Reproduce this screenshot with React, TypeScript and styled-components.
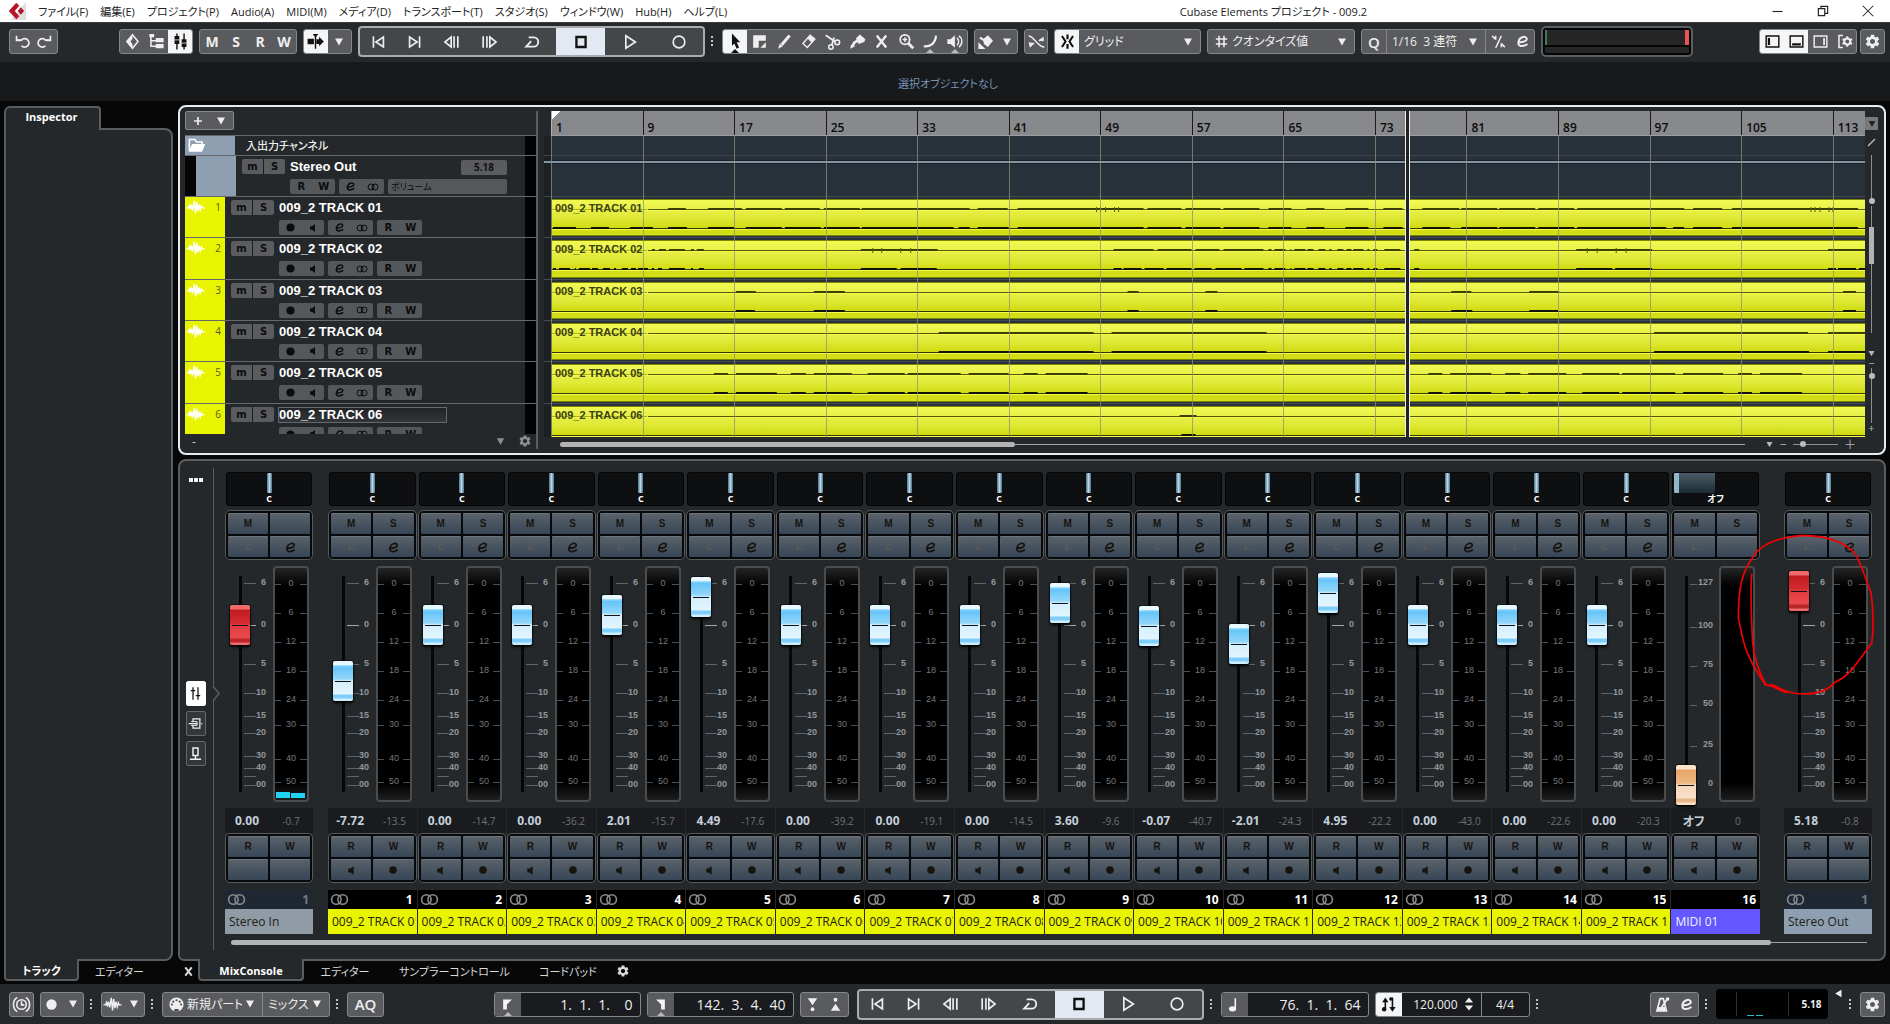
import React from "react";
import styled, { createGlobalStyle, css } from "styled-components";
import { MdSettings } from "react-icons/md";

const UI = `"Open Sans", "Noto Sans CJK JP", sans-serif`;
const ARIAL = `"Liberation Sans", "Noto Sans CJK JP", sans-serif`;

const c = {
  panel: "#25282b",
  line: "#5a5d60",
  button: "#5a5b5e",
  buttonLine: "#85878a",
  yellow: "#e9f500",
  steel: "#8f9fb2",
};

const Global = createGlobalStyle`
  * { box-sizing: border-box; }
  body { margin: 0; background: #070707; font-family: ${UI}; font-feature-settings: "palt"; color: #eee; }
  button, input, select { font: inherit; font-feature-settings: inherit; color: inherit; margin: 0; padding: 0; border: 0; background: none; border-radius: 0; outline: 0; min-width: 0; }
  button { display: flex; align-items: center; justify-content: center; }
  select { appearance: none; }
  svg { display: block; flex: none; }
`;

/* ---------- icons ---------- */

const line = (d: string, w = 2) => <path d={d} fill="none" stroke="currentColor" strokeWidth={w} />;
const fill = (d: string) => <path d={d} fill="currentColor" />;

const icons: Record<string, React.ReactNode> = {
  undo: <>{line("M5 10 H12 A6 6 0 1 1 12 18", 2.4)}{line("M5 4 V10.500 H11", 2.4)}</>,
  redo: <>{line("M19 10 H12 A6 6 0 1 0 12 18", 2.4)}{line("M19 4 V10.500 H13", 2.4)}</>,
  diamond: <>{line("M12 3.500 L19 12 L12 20.500 L5 12 Z", 2)}{fill("M12 2.500 L4 12 L12 21.500 V15.500 L9.500 12 L12 8.500 Z")}</>,
  tree: <>{line("M5 3 V18 H12 M5 11 H12", 2)}{fill("M3 2.500 H9 V6.500 H3 Z M11 7.500 H21 V13 H11 Z M11 15 H21 V20.500 H11 Z")}</>,
  faders: <>{line("M7.500 2 V22 M16.500 2 V22", 1.8)}{fill("M4.500 5 H10.500 V15 H4.500 Z M13.500 9 H19.500 V19 H13.500 Z")}<path d="M4.500 10 H10.500 M13.500 14 H19.500" stroke="#eee" /></>,
  autoscroll: <>{line("M12 4 V21", 1.8)}{fill("M8.500 2.500 H15.500 L12 7 Z M2 8.500 H10 V15.500 H2 Z M13 9 H16.500 V6 L22.500 12 L16.500 18 V15 H13 Z")}</>,
  start: line("M6.500 5 V19 M18.500 6 V18 L9.500 12 Z"),
  end: line("M17.500 5 V19 M5.500 6 V18 L14.500 12 Z"),
  rewind: line("M11 6 V18 L3.500 12 Z M14.500 5 V19 M19 5 V19"),
  forward: line("M13 6 V18 L20.500 12 Z M9.500 5 V19 M5 5 V19"),
  cycle: line("M8 6.500 H14 A5.500 5.500 0 0 1 14 17.500 H5 L11 11", 2.2),
  stop: line("M6.500 6 H17.500 V18 H6.500 Z", 2.8),
  play: line("M7 4.500 L18.500 12 L7 19.500 Z"),
  record: <circle cx="12" cy="12" r="7" fill="none" stroke="currentColor" strokeWidth="2" />,
  arrow: fill("M7.500 2 L18 13 H13.500 L16.500 19.500 L13.500 21 L10.500 14.500 L7.500 17.500 Z"),
  range: <>{fill("M4 4 H20 V11 H11 V20 H4 Z")}{fill("M20 13 V20 H13 Z")}</>,
  pencil: <>{line("M8.500 16 L18.500 4.500", 3.8)}{fill("M4 21 L6 14.500 L10 18 Z")}</>,
  eraser: <>{line("M5 14.500 L14 4 L20 9 L10.500 19.500 Z", 1.8)}{fill("M10.500 8 L14 4 L20 9 L16 13.500 Z")}</>,
  scissors: <>{line("M3.500 4 L15 12 M11 17 L14 7", 2.2)}<circle cx="18" cy="13" r="3" fill="none" stroke="currentColor" strokeWidth="2" /><circle cx="10" cy="19" r="2.800" fill="none" stroke="currentColor" strokeWidth="2" /></>,
  glue: <>{fill("M10 8 L15 3 L22 9 L20.500 12.500 L13.500 15 Z")}{line("M12 11 L8 13.500 L5.500 18", 3.4)}{fill("M3 21 L3.500 16 L9 18 Z")}</>,
  mute: line("M6 4.500 L18 19.500 M18 4.500 L6 19.500", 3),
  zoom: <>{<circle cx="10" cy="9.500" r="6" fill="none" stroke="currentColor" strokeWidth="2.200" />}{line("M14 14 L20.500 20.500", 3.6)}{line("M7 9.500 H13 M10 6.500 V12.500", 1.8)}</>,
  curve: line("M3.500 18 C11 19 18 15 19 4.500", 2.8),
  speaker: <>{fill("M3 9 H7 L12.500 4 V20 L7 15 H3 Z")}{line("M15 7.500 C18 9.500 18 14.500 15 16.500 M17.500 5 C22.500 8 22.500 16 17.500 19", 1.8)}</>,
  bucket: <>{fill("M9 9 L15 4 L21.500 11 L15 19 L10 15 Z M3 13 L12 21.500 L3 21.500 Z")}{line("M5 7 L11 11", 2.6)}</>,
  fade: <>{line("M2 5 C9 5 13 19 22 19", 1.8)}{line("M3 18 L9 14 M15 11 L21 9", 1.8)}{fill("M2 13 L9 14 L4 20 Z M15 10 L21 6 V12 Z")}</>,
  snap: <>{line("M12 3 V9 M12 15 V21", 2.8)}{line("M5 5 L9.500 12 L5 19 M19 5 L14.500 12 L19 19", 2.6)}</>,
  hash: line("M8.500 4 V20 M15.500 4 V20 M4 8.500 H20 M4 15.500 H20", 2.2),
  swing: <>{line("M8 21 L16 4", 2)}{line("M3 4 L8 9 M8 4 V9.500 M21 20 L16 15 M16 20 V14.500", 2.2)}</>,
  edit: line("M6 13 C13 13.500 18.500 11 18 8 C17 3.500 8.500 5 6.500 11.500 C4.500 19 11.500 20.500 19 15.500", 2.8),
  zoneLeft: <>{line("M4 5 H20 V19 H4 Z", 1.8)}{line("M7.500 7.500 V16.500", 2.8)}</>,
  zoneBottom: <>{line("M4 5 H20 V19 H4 Z", 1.8)}{line("M6.500 15.500 H17.500", 2.8)}</>,
  zoneRight: <>{line("M4 5 H20 V19 H4 Z", 1.8)}{line("M16.500 7.500 V16.500", 2.2)}</>,
  zoneSetup: <>{line("M10 4.500 H5 V19.500 H10", 2)}<circle cx="15.500" cy="12" r="3.800" fill="none" stroke="currentColor" strokeWidth="2.600" />{line("M15.500 5.500 V9 M15.500 15 V18.500 M9.500 9 L12.500 10.500 M18.500 13.500 L21.500 15 M9.500 15 L12.500 13.500 M18.500 10.500 L21.500 9", 2.4)}</>,
  wave: line("M0.500 12.500 H3 L4.500 9.500 L5.500 14.500 L7 8.500 L8.500 15.500 L10.500 3.500 L12 19.500 L13.500 5 L15 16.500 L16.500 8.500 L18 15 L19.500 10 L20.500 12.500 H23.500", 1.8),
  din: <><circle cx="12" cy="12" r="10" fill="currentColor" />{[[5.5, 12], [7.5, 8], [12, 6], [16.5, 8], [18.5, 12]].map(([x, y]) => <circle key={x} cx={x} cy={y} r="1.500" fill="#4a4b4e" />)}<path d="M9 22 V18.500 H15 V22" fill="#4a4b4e" /></>,
  clock: <><circle cx="12" cy="12" r="6" fill="none" stroke="currentColor" strokeWidth="2" />{line("M12 8 V12.500 H15.500", 2)}{line("M6.500 3 A11 11 0 0 0 6.500 21 M17.500 3 A11 11 0 0 1 17.500 21", 2)}</>,
  dot: <circle cx="12" cy="12" r="6.500" fill="currentColor" />,
  monitor: fill("M6 8.500 H10 L16 4 V20 L10 15.500 H6 Z"),
  flagLeft: fill("M5 4 H19 L11 12 V20 H5 Z"),
  flagRight: fill("M19 4 H5 L13 12 V20 H19 Z"),
  punchIn: <>{fill("M6 4 H18 L12 13 Z")}<circle cx="12" cy="18" r="2.400" fill="currentColor" /></>,
  punchOut: <>{fill("M6 20 H18 L12 11 Z")}<circle cx="12" cy="6" r="2.400" fill="currentColor" /></>,
  note: <><ellipse cx="9.500" cy="17.500" rx="4.500" ry="3.400" fill="currentColor" />{line("M13 17 V4", 2)}</>,
  tempo: <>{line("M8 5 V18 M17 3 V17", 2)}{fill("M4 9 L8 3 L12 9 Z M13 15 L17 21 L21 15 Z")}<circle cx="6.500" cy="18" r="2.800" fill="currentColor" /><circle cx="15" cy="5" r="2.200" fill="currentColor" /></>,
  metronome: <>{line("M9 4.500 H13 L17 20 H5 Z", 2.2)}{line("M10.500 16 L18 5", 2.2)}{fill("M6.500 15 H15.500 V20 H5.500 Z")}<circle cx="18.500" cy="5" r="2.200" fill="currentColor" /></>,
  link: <><circle cx="8" cy="12" r="6" fill="none" stroke="currentColor" strokeWidth="2" /><circle cx="16" cy="12" r="6" fill="none" stroke="currentColor" strokeWidth="2" /></>,
  folder: <>{line("M3 18 V4.500 H10 L12 7.500 H19 V10", 2)}{fill("M6.500 10 H23 L19 20 H2 Z")}</>,
  railFaders: line("M8 2 V22 M16 2 V22 M4.500 7.500 H11.500 M12.500 15.500 H19.500", 2),
  railRack: <>{line("M8 9 V4.500 H19 V19.500 H8 V15", 2)}{line("M1 12 H15 M21 12 H23", 2)}{line("M5 9 H14.500 V15 H5", 1.6)}</>,
  railMeter: line("M8 3 H16 V15 H8 Z M12 15 V20 M3 21 H21", 2.4),
  caret: fill("M4 5 H20 L12 19 Z"),
  caretLeft: fill("M20 2 V22 L3 12 Z"),
  plus: line("M12 4 V20 M4 12 H20", 3.4),
  close: line("M5 3 L19 21 M19 3 L5 21", 4.4),
  minimize: line("M4 12 H20", 1.8),
  restore: line("M4 8 H15 V20 H4 Z M8.500 8 V4 H20 V16 H15", 2),
  quit: line("M3 3 L21 21 M21 3 L3 21", 1.8),
  spin: fill("M12 1 L19 9.500 H5 Z M12 23 L19 14.500 H5 Z"),
};

const Icon = ({ name, size = 19 }: { name: string; size?: number }) => (
  <svg width={size} height={size} viewBox="0 0 24 24" aria-hidden="true">{icons[name]}</svg>
);

/* ---------- window chrome ---------- */

const Window = styled.div`display: flex; flex-direction: column; min-height: 100vh;`;

const MenuBar = styled.header`
  display: flex; align-items: center; height: 23px; padding-left: 8px;
  background: #fff; color: #222; font-size: 11px; border-bottom: 1px solid #3a3c3e;
`;
const Menu = styled.nav`display: flex; gap: 12px; margin-left: 12px;`;
const MenuItem = styled.button`white-space: nowrap;`;
const Space = styled.div<{ $grow: number }>`flex: ${p => p.$grow};`;
const WindowButton = styled.button`width: 45px; height: 20px;`;

const Bar = styled.div<{ $spread?: boolean }>`
  display: flex; align-items: center; gap: 6px; height: ${p => (p.$spread ? 40 : 39)}px;
  padding: ${p => (p.$spread ? "0 5px 0 9px" : "0 5px 2px 9px")};
  background: ${c.panel}; font-size: 12px;
  justify-content: ${p => (p.$spread ? "space-between" : "flex-start")};
`;
const BarPart = styled.div<{ $push?: boolean }>`
  display: flex; align-items: center; gap: 6px; ${p => p.$push && "margin-left: auto; gap: 3px;"}
`;
const Group = styled.div<{ $w: number; $after?: number }>`
  display: flex; width: ${p => p.$w}px; height: 25px; margin-right: ${p => p.$after ?? 0}px; flex: none;
  background: ${c.button}; border: 1px solid ${c.buttonLine}; border-radius: 3px; overflow: hidden;
`;
const Tool = styled.button<{ $on?: boolean; $split?: boolean; $notch?: boolean }>`
  flex: 1; position: relative; font-weight: 700; font-size: 14px;
  ${p => p.$on && "background: #f4f5f6; color: #111;"}
  ${p => p.$split && `border-right: 1px solid ${c.buttonLine};`}
  ${p => p.$notch && css`
    &::after { content: ""; position: absolute; bottom: 0; border: 4px solid transparent; border-top: 0; border-bottom-color: ${p.$on ? "#111" : "#bbb"}; }
  `}
`;
const Pick = styled.label<{ $w?: number; $split?: boolean }>`
  display: flex; align-items: center; padding: 0 6px 0 5px; gap: 2px;
  ${p => (p.$w ? `width: ${p.$w}px;` : "flex: 1; min-width: 0;")}
  ${p => p.$split && `border-right: 1px solid ${c.buttonLine};`}
  select { flex: 1; height: 100%; }
`;
const Fixed = styled.button<{ $w: number; $on?: boolean; $split?: boolean }>`
  width: ${p => p.$w}px; flex: none; font-size: 15px; font-weight: 600;
  ${p => p.$on && "background: #f4f5f6; color: #111;"}
  ${p => p.$split && `border-right: 1px solid ${c.buttonLine};`}
`;
const Transport = styled.div`
  display: flex; width: 347px; height: 31px; flex: none; overflow: hidden;
  background: #44474a; border: 2px solid #a9abad; border-radius: 4px;
`;
const TransportButton = styled.button<{ $wide?: boolean; $on?: boolean }>`
  flex: ${p => (p.$wide ? 49 : 37)};
  ${p => p.$on && "background: #e3e9f3; color: #111;"}
`;
const Grip = styled.span`
  width: 5px; height: 11px; flex: none;
  background: repeating-linear-gradient(#c4c6c8 0 2px, transparent 2px 4px) left / 2px 11px no-repeat;
`;
const LoadMeter = styled.div`
  width: 152px; height: 31px; padding: 2px; background: #050505; border: 2px solid #5b5e60; border-radius: 5px;
  display: grid; grid-template-rows: 15px 1fr; gap: 2px;
`;
const LoadBar = styled.div<{ $hot?: boolean }>`
  background: #262626; ${p => p.$hot && "border-left: 2px solid #3d7a58; border-right: 4px solid #ee5350;"}
`;
const InfoLine = styled.div`
  height: 39px; display: flex; align-items: center; justify-content: center; padding: 2px 0 0 6px;
  background: #18191b; color: #7593b8; font-size: 11px;
`;
const Locator = styled.label<{ $w: number }>`
  display: flex; width: ${p => p.$w}px; height: 25px; flex: none; align-items: stretch;
  border: 1px solid ${c.buttonLine}; border-radius: 3px; background: #191b1e; overflow: hidden;
  input { flex: 1; text-align: right; padding-right: 7px; font-size: 14px; }
`;
const LocatorIcon = styled.span<{ $on?: boolean; $notch?: boolean }>`
  width: 26px; display: flex; align-items: center; justify-content: center; position: relative;
  background: ${p => (p.$on ? "#f4f5f6" : c.button)}; color: ${p => (p.$on ? "#111" : "#f4f4f4")};
  ${p => p.$notch && css`
    &::after { content: ""; position: absolute; bottom: 0; border: 4px solid transparent; border-top: 0; border-bottom-color: #bbb; }
  `}
`;
const TempoBox = styled.div`
  display: flex; width: 155px; height: 25px; align-items: stretch; overflow: hidden;
  border: 1px solid ${c.buttonLine}; border-radius: 3px; background: #191b1e;
  input { text-align: right; font-size: 12px; width: 56px; }
  input:last-child { text-align: center; width: 48px; border-left: 1px solid ${c.buttonLine}; }
`;
const OutMeter = styled.div`
  width: 112px; height: 30px; background: #000; border-radius: 4px; display: grid;
  grid-template-columns: 21px 52px 1fr; align-items: center; justify-items: center;
  font-size: 10px; font-weight: 700;
  span:nth-child(-n + 2) { height: 24px; width: 100%; border-right: 1px solid #333; }
  span:last-child { padding-left: 6px; }
`;
const OutLevel = styled.span`
  background: linear-gradient(90deg, #2fb8c9 7px, transparent 7px 9px, #2fb8c9 9px) 10px 100% / 16px 1px no-repeat;
`;
const Clipped = styled.span`align-self: flex-start;`;

/* ---------- layout ---------- */

const Body = styled.main`flex: 1; display: flex; gap: 4px; padding: 4px 4px 3px; background: #070707;`;
const LeftZone = styled.aside`width: 170px; flex: none; display: flex; flex-direction: column;`;
const LeftBody = styled.div`
  flex: 1; background: ${c.panel}; border: 2px solid ${c.line}; border-radius: 0 8px 8px 0; margin-right: 1px;
`;
const TopTab = styled.div`
  width: 97px; height: 24px; margin-bottom: -2px; position: relative; margin-top: 1px;
  display: flex; align-items: center; justify-content: center; padding: 0 2px 5px 0;
  background: ${c.panel}; border: 2px solid ${c.line}; border-bottom: 0; border-radius: 6px 4px 0 0;
  font-size: 11px; font-weight: 700; color: #fff;
`;
const TabRow = styled.div`display: flex; height: 20px; font-size: 11px; color: #d8dadc;`;
const Tab = styled.button<{ $on?: boolean; $w: number }>`
  width: ${p => p.$w}px; white-space: nowrap; flex: none;
  ${p => p.$on && css`
    position: relative; height: 22px; margin-top: -2px; padding-top: 2px; color: #fff; font-weight: 700;
    background: ${c.panel}; border: 2px solid ${c.line}; border-top: 0; border-radius: 0 0 4px 4px;
  `}
`;
const RightZone = styled.div`flex: 1; min-width: 0; display: flex; flex-direction: column;`;

/* ---------- project ---------- */

const Project = styled.section`
  display: flex; height: 350px; padding-top: 4px; margin-bottom: 4px;
  background: ${c.panel}; border: 2px solid #e8eaec; border-radius: 8px;
`;
const TrackPane = styled.div`width: 358px; flex: none; padding-left: 5px; border-right: 2px solid ${c.line}; margin-bottom: 4px;`;
const TrackHead = styled.div`height: 24px;`;
const AddGroup = styled.div`
  display: flex; width: 49px; height: 19px; background: ${c.button}; border: 1px solid ${c.buttonLine}; border-radius: 2px;
`;
const TrackList = styled.div`height: 299px; overflow: hidden;`;
const SixRows = styled.div`display: grid; grid-template-rows: repeat(6, minmax(0, 1fr)); height: 248px;`;
const rowLine = "border-top: 1px solid #66696b;";
const Row = styled.div`display: flex; ${rowLine} overflow: hidden;`;
const FolderRow = styled(Row)`height: 20px;`;
const StereoRow = styled(Row)`height: 41px;`;
const FolderCell = styled.div`width: 50px; background: ${c.steel}; display: flex; align-items: center; padding-left: 2px; color: #fff;`;
const StereoCell = styled.div`width: 51px; background: ${c.steel}; border-left: 11px solid #050505;`;
const FolderName = styled.div`flex: 1; padding-left: 11px; font-size: 11px; font-weight: 500; line-height: 19px;`;
const ColorCell = styled.div`
  width: 40px; background: ${c.yellow}; display: flex; justify-content: space-between; padding: 1px 4px 0 1px;
  font-size: 10px; line-height: 18px; color: #555a1c;
  svg { color: #fff; }
`;
const Cells = styled.div`
  flex: 1; min-width: 0; padding: 3px 0 0 6px; display: grid; grid-template-columns: 43px 1fr;
  grid-template-rows: 16px 15px; column-gap: 4px; row-gap: 4px;
`;
const MuteSolo = styled.div`
  display: flex; gap: 1px; height: 15px; border-radius: 2px; overflow: hidden; background: #1a1c1e;
  button { flex: 1; background: #5a5c5f; color: #0c0c0c; font: 700 10px/15px "DejaVu Sans", sans-serif; }
`;
const Chips = styled.div`grid-column: 2; display: flex; gap: 4px; padding-left: 1px;`;
const Chip = styled.div<{ $wide?: boolean }>`
  display: flex; width: ${p => (p.$wide ? 119 : 45)}px; height: 15px; background: #55585b; border-radius: 2px; color: #0c0c0c;
  button { flex: 1; font: 700 10px/15px "DejaVu Sans", sans-serif; }
  span { font-size: 9px; line-height: 15px; padding-left: 3px; }
`;
const NameLine = styled.div`display: flex; justify-content: space-between; padding-right: 18px; align-items: center;`;
const NameInput = styled.input<{ $active?: boolean }>`
  width: 169px; height: 16px; font: 700 13px/16px ${ARIAL}; color: #fff; padding-left: 1px;
  ${p => p.$active && "box-shadow: inset 0 0 0 1px #66696c; background: linear-gradient(#202226, #34373b);"}
`;
const VolumeBox = styled.span`
  width: 46px; height: 15px; background: #5a5c5f; color: #111; border-radius: 2px;
  font: 700 10px/15px ${UI}; text-align: center;
`;
const LevelStrip = styled.div`width: 11px; background: #020202;`;
const TrackFoot = styled.div`
  display: flex; align-items: center; height: 14px; padding: 0 4px 0 7px; gap: 12px; color: #8d9092; font-size: 12px;
  span { flex: 1; color: #ccc; }
`;

const Timeline = styled.div`flex: 1; min-width: 0; margin-left: 6px;`;
const barColumns = "display: grid; grid-template-columns: repeat(14, 17fr) 6fr;";
const Ruler = styled.div`
  ${barColumns} height: 25px; margin-left: 7px; background: #87898c; color: #0c0c0c; overflow: hidden;
  border-bottom: 1px solid #9b9da0;
  span { border-left: 1px solid #1a1a1a; padding: 9px 0 0 4px; font-size: 12px; line-height: 15px; font-weight: 600; }
  span:first-child { background: linear-gradient(135deg, #fff 6px, transparent 6px); border-color: #b0b2b4; }
`;
const Lanes = styled.div`
  height: 301px; position: relative; clip-path: inset(-25px 0 0 0);
  background: linear-gradient(90deg, #1d2023 7px, #28303a 7px);
`;
const FolderLane = styled.div`height: 19px;`;
const StereoLane = styled.div`
  height: 41px; border-top: 1px solid #3d444c; padding-top: 4px;
  &::before { content: ""; display: block; height: 2px; background: #8494a2; border: solid #1a2028; border-width: 1px 0; }
`;
const LaneRow = styled.div`
  padding: 2px 0 1px 7px; border-top: 1px solid #434a52; display: grid; grid-template-rows: minmax(0, 1fr);
`;
const Clip = styled.div`
  display: grid; grid-template-rows: minmax(0, 1fr); overflow: hidden;
  border: 1px solid #7d8505; border-left-color: #4b5003; border-right: 0;
  background: linear-gradient(#f1f955, #e0e938 50%, #d2dc14 76%, #d4de18);
  > * { grid-area: 1 / 1; }
  > svg { width: 100%; height: 36px; }
  > span { font: 700 11px/13px ${ARIAL}; color: #3b4016; padding: 2px 0 0 3px; }
`;
const BarLines = styled.div`
  ${barColumns} position: absolute; inset: 0 0 0 7px; pointer-events: none;
  span { border-left: 1px solid rgba(140, 145, 120, 0.75); }
`;
const Playhead = styled.div`
  position: absolute; top: -25px; bottom: 0; left: 65.2%; width: 5px;
  background: #222; border: solid #f0f0f0; border-width: 0 1px;
`;
const TimelineFoot = styled.div`display: flex; align-items: center; height: 14px; color: #b4b6b8; padding: 0 0 0 16px;`;
const ScrollLine = styled.div<{ $thumb: number; $rest: number }>`
  flex: 1; height: 5px; display: grid; grid-template-columns: ${p => p.$thumb}fr ${p => p.$rest}fr; align-items: center;
  &::before { content: ""; height: 5px; border-radius: 3px; background: #b3b3b4; }
  &::after { content: ""; height: 1px; background: #a3a4a6; }
`;
const ZoomRange = styled.input.attrs({ type: "range" })<{ $tall?: number }>`
  appearance: none; flex: none;
  ${p => (p.$tall
    ? `writing-mode: vertical-lr; width: 7px; height: ${p.$tall}px; background: linear-gradient(#8d8f91, #8d8f91) center / 1px 100% no-repeat;`
    : "width: 45px; height: 7px; background: linear-gradient(#8d8f91, #8d8f91) center / 100% 1px no-repeat;")}
  &::-webkit-slider-thumb { appearance: none; width: 6px; height: 6px; border-radius: 50%; background: #b9bbbd; }
`;
const ZoomBits = styled.div`display: flex; align-items: center; gap: 6px; padding: 0 9px 0 20px; font-size: 12px;`;
const SideStrip = styled.div`
  width: 19px; flex: none; display: flex; flex-direction: column; align-items: center; padding: 6px 6px 0 0; color: #b4b6b8;
  font-size: 11px; line-height: 10px;
`;
const SideButton = styled.button`width: 13px; height: 13px; background: #77797b; color: #222; border-radius: 1px; margin-bottom: 8px;`;
const Slash = styled.svg`margin-bottom: 8px;`;
const SideScroll = styled.div`
  width: 5px; height: 127px; margin: 2px 0 16px;
  background: linear-gradient(#b3b3b4, #b3b3b4) 0 21px / 5px 37px no-repeat, linear-gradient(#8d8f91, #8d8f91) center / 1px 100% no-repeat;
`;

/* ---------- mixer ---------- */

const Mixer = styled.section`
  position: relative; display: flex; background: ${c.panel}; padding-bottom: 9px;
  border: 2px solid ${c.line}; border-radius: 8px 8px 8px 6px;
`;
const Rail = styled.div`
  width: 34px; flex: none; margin-top: 7px; padding: 4px 2px 0 0; position: relative; border-right: 1px solid ${c.line};
  display: flex; flex-direction: column; align-items: center; gap: 5px;
`;
const RailMore = styled.button`
  width: 20px; height: 16px; margin-bottom: 188px;
  background: repeating-linear-gradient(90deg, #f2f2f2 0 4px, transparent 4px 5px) center / 14px 4px no-repeat;
`;
const RailButton = styled.button<{ $on?: boolean }>`
  width: 20px; height: 25px; border-radius: 2px; border: 1px solid #66696b; background: #33363a;
  ${p => p.$on && "background: #fff; border-color: #fff; color: #111;"}
`;
const Notch = styled.svg`position: absolute; right: -8px; top: 218px; color: ${c.line};`;
const Desk = styled.div`flex: 1; min-width: 0; padding: 11px 12px 0 11px;`;
const Strips = styled.div`display: flex;`;
const Bank = styled.div`
  flex: 1; min-width: 0; margin: 0 24px 0 15px; display: grid; grid-template-columns: repeat(16, minmax(0, 1fr)); gap: 1px;
`;
const Strip = styled.div<{ $fixed?: boolean }>`${p => p.$fixed && "width: 88px; flex: none;"}`;
const Pan = styled.div`
  height: 34px; margin: 0 1px 4px; background: #0e0f10; border: 1px solid #050505; border-radius: 3px;
  display: flex; flex-direction: column; align-items: center;
  font-size: 9px; line-height: 11px; font-weight: 700; color: #fff;
`;
const PanBar = styled.span<{ $off?: boolean }>`
  height: 20px; width: 5px; border-radius: 1px; background: linear-gradient(90deg, #4e7187, #b5d8ea, #4e7187);
  ${p => p.$off && css`
    width: 41px; align-self: flex-start; margin-left: 1px; border-left: 5px solid #8fb6ca;
    background: linear-gradient(#4a5c65, #1c2c34);
  `}
`;
const Pad = styled.div`
  height: 50px; padding: 2px; display: grid; grid-template: 1fr 1fr / 1fr 1fr; gap: 2px;
  background: #08090a; border: 1px solid #585b5e; border-radius: 5px;
`;
const PadButton = styled.button<{ $dim?: boolean }>`
  background: linear-gradient(#5a626b, #47535f 50%, #374657); border-top: 1px solid #6b737b; border-radius: 1px;
  font: 700 10px/18px ${ARIAL}; color: ${p => (p.$dim ? "#5c5a56" : "#17140f")};
`;
const FaderZone = styled.div`display: flex; height: 242px; margin: 3px 0; padding-left: 5px;`;

type Tone = "blue" | "red" | "orange";
const caps: Record<Tone, string> = {
  blue: "linear-gradient(#e8f8ff 0 4px, #9bdcfd 4px 5px, #63c4f8 6px, #93d6f9 18px, #d3effd 20px, #e2f5fe 33px, #7fcdf8 34px 37px, #cdeefe 38px)",
  red: "linear-gradient(#f06a6a 0 4px, #c01c20 5px, #d42b30 18px, #e23a3e 20px, #ea4a4e 33px, #b9272b 34px 37px, #ee6a6c 38px)",
  orange: "linear-gradient(#fce4cc 0 4px, #e7a566 5px, #eeb983 18px, #f6d6b8 20px, #f9e1cb 33px, #eab888 34px 37px, #fbe3cd 38px)",
};
const Fader = styled.input.attrs({ type: "range" })<{ $tone: Tone }>`
  appearance: none; writing-mode: vertical-lr; direction: rtl; width: 20px; height: 242px; flex: none; z-index: 1;
  background: linear-gradient(#060708, #060708) center / 3px 216px no-repeat;
  &::-webkit-slider-thumb {
    appearance: none; width: 20px; height: 40px; border-radius: 2px; box-shadow: 0 2px 3px #000, 0 0 0 1px rgba(0, 0, 0, 0.4);
    background: linear-gradient(#101418, #101418) center / 16px 1px no-repeat, ${p => caps[p.$tone]};
  }
`;
const Scale = styled.svg`
  margin-left: -6px; flex: none;
  text { font: 700 9px ${ARIAL}; fill: #92969a; text-anchor: end; }
`;
const Meter = styled.div`
  width: 36px; height: 236px; margin: 3px 0 0 5px; flex: none; border: 2px solid #4a4d50; border-radius: 4px;
  background: linear-gradient(#242424, #000 18px, #000 215px, #1e1e1e); overflow: hidden;
  text { font: 9px ${ARIAL}; fill: #74787c; text-anchor: middle; }
`;
const Values = styled.div`
  height: 25px; display: grid; grid-template-columns: 1fr 1fr; align-items: center; justify-items: center;
  background: #1a1b1e; color: #c2cfdc;
  b { font-size: 12px; }
  span { font-size: 10px; color: #6d7276; }
`;
const NumberRow = styled.div<{ $io?: boolean }>`
  margin-top: 7px; height: 19px; display: flex; align-items: center; justify-content: space-between; padding: 0 4px 0 2px;
  background: ${p => (p.$io ? "#1e2732" : "#000")}; color: ${p => (p.$io ? "#777b7f" : "#fff")};
  font-size: 12px; font-weight: 700;
  svg { color: #8b8d8f; }
`;
const NameRow = styled.div<{ $bg: string; $fg: string }>`
  height: 25px; padding: 0 1px 0 4px; background: ${p => p.$bg}; color: ${p => p.$fg}; font-size: 12px; line-height: 25px;
  span { display: block; overflow: hidden; white-space: nowrap; }
`;
const DeskScroll = styled.div`display: flex; height: 16px; align-items: center; padding: 0 5px 0 6px;`;
const Annotation = styled.svg`position: absolute; right: 8px; top: 72px; z-index: 2; pointer-events: none;`;

/* ---------- data ---------- */

const menus = ["ファイル(F)", "編集(E)", "プロジェクト(P)", "Audio(A)", "MIDI(M)", "メディア(D)", "トランスポート(T)", "スタジオ(S)", "ウィンドウ(W)", "Hub(H)", "ヘルプ(L)"];
const tools: [string, string][] = [["arrow", "選択"], ["range", "範囲"], ["pencil", "鉛筆"], ["eraser", "消去"], ["scissors", "分割"], ["glue", "のり"], ["mute", "ミュート"], ["zoom", "ズーム"], ["curve", "カーブ"], ["speaker", "試聴"]];
const bars = Array.from({ length: 15 }, (_, i) => 1 + i * 8);

type Seg = [number, number];
const shift = (segs: Seg[], by: number) => segs.map(([a, b]): Seg => [a + by, b + by]);

const intro1: Seg[] = [[1, 24], [39, 57], [78, 101], [116, 135]];
const intro2: Seg[] = [[1, 4], [7, 18], [23, 24], [27, 38], [40, 46], [51, 58], [62, 64], [70, 76], [79, 84], [86, 96], [100, 102], [106, 110], [117, 133], [139, 141], [147, 152]];
const verse5: Seg[] = [[162, 176], [184, 225], [239, 254], [262, 300], [316, 353], [356, 409], [417, 457], [472, 486], [494, 536]];

const waves: { top: Seg[]; low: Seg[]; peaks?: number[] }[] = [
  {
    top: [[116, 134], [156, 190], [194, 230], [233, 268], [272, 308], [310, 418], [426, 456], [466, 592], [596, 630], [634, 669], [672, 708], ...shift(intro1, 716), [871, 908], [910, 946], [948, 984], [987, 1023], [1026, 1133], [1142, 1171], [1181, 1307]],
    low: [...intro1, [156, 183], [194, 230], [233, 269], [272, 308], [310, 402], [407, 418], [426, 457], [466, 592], [596, 630], [634, 669], [672, 708], ...shift(intro1, 716), [871, 899], [910, 946], [948, 984], [987, 1023], [1026, 1115], [1122, 1133], [1142, 1171], [1181, 1307]],
    peaks: [545, 549, 554, 563, 567, 1260, 1264, 1269, 1278, 1282],
  },
  {
    top: [[100, 103], [107, 114], [117, 133], [139, 142], [145, 152], [309, 386], [562, 602], [606, 640], [644, 668], [672, 712], ...shift(intro2, 716), [1025, 1101], [1277, 1314]],
    low: [...intro2, [309, 345], [349, 385], [562, 570], [572, 590], [593, 612], [615, 640], [643, 660], [664, 690], [693, 712], ...shift(intro2, 716), [1025, 1061], [1064, 1101], [1277, 1285], [1287, 1305], [1308, 1314]],
    peaks: [321, 330, 349, 359, 1036, 1046, 1065, 1075],
  },
  { top: [[184, 204], [262, 293], [576, 587], [654, 666], [900, 920], [978, 1008], [1292, 1305]], low: [[184, 203], [262, 293], [576, 587], [654, 666], [900, 921], [978, 1007], [1292, 1305]] },
  { top: [[387, 542], [560, 715], [1103, 1257], [1277, 1314]], low: [[387, 542], [560, 715], [1103, 1258], [1277, 1314]] },
  { top: [...verse5, ...shift(verse5, 715)], low: [...verse5, ...shift(verse5, 715)] },
  { top: [[628, 645]], low: [[630, 644]] },
];

const segPath = (segs: Seg[], y: number, h: number) => segs.map(([a, b]) => `M${a} ${y}H${b}V${y + h}H${a}Z`).join("");

const Wave = ({ top, low, peaks = [] }: { top: Seg[]; low: Seg[]; peaks?: number[] }) => (
  <svg viewBox="0 0 1314 36" preserveAspectRatio="none" aria-hidden="true">
    <path d="M0 0H1314V1H0ZM0 10H1314V11H0ZM0 29H1314V30H0Z" fill="#f4fb4a" />
    <path d="M0 9H95V10H0Z" fill="#a9b01a" />
    <path d="M96 9H1314V10H96Z" fill="#55590a" />
    <path d="M0 28H1314V29H0Z" fill="#34370a" />
    <path d={segPath(top, 8, 2)} fill="#3b3f06" />
    <path d={segPath(low, 27, 2)} fill="#101206" />
    <path d={peaks.map(x => `M${x} 7V12`).join("")} stroke="#55590a" />
  </svg>
);

interface Channel { name: string; no: number; level: number; value: string; peak: string; kind: "in" | "out" | "audio" | "midi"; }
const levels: [number, string, string][] = [
  [104, "-7.72", "-13.5"], [160, "0.00", "-14.7"], [160, "0.00", "-36.2"], [170, "2.01", "-15.7"], [188, "4.49", "-17.6"],
  [160, "0.00", "-39.2"], [160, "0.00", "-19.1"], [160, "0.00", "-14.5"], [182, "3.60", "-9.6"], [159, "-0.07", "-40.7"],
  [141, "-2.01", "-24.3"], [192, "4.95", "-22.2"], [160, "0.00", "-43.0"], [160, "0.00", "-22.6"], [160, "0.00", "-20.3"],
];
const channels: Channel[] = levels.map(([level, value, peak], i) => ({
  name: `009_2 TRACK ${String(i + 1).padStart(2, "0")}`, no: i + 1, level, value, peak, kind: "audio",
}));
channels.push({ name: "MIDI 01", no: 16, level: 0, value: "オフ", peak: "0", kind: "midi" });

const audioScale: [string, number][] = [["6", 20], ["0", 62], ["5", 101], ["10", 130], ["15", 153], ["20", 170], ["30", 193], ["40", 205], ["", 213], ["00", 222]];
const midiScale: [string, number][] = [["127", 20], ["100", 63], ["75", 102], ["50", 141], ["25", 182], ["0", 221]];
const meterScale: [string, number][] = [["0", 16], ["6", 45], ["12", 74], ["18", 103], ["24", 132], ["30", 157], ["40", 191], ["50", 214]];

/* ---------- parts ---------- */

const Caret = () => <Icon name="caret" size={12} />;

const TransportBar = () => (
  <Transport>
    {["start", "end", "rewind", "forward"].map(n => <TransportButton key={n} aria-label={n}><Icon name={n} size={20} /></TransportButton>)}
    {["cycle", "stop", "play", "record"].map(n => <TransportButton key={n} $wide $on={n === "stop"} aria-label={n}><Icon name={n} size={20} /></TransportButton>)}
  </Transport>
);

const ChannelStrip = ({ ch, fixed }: { ch: Channel; fixed?: boolean }) => {
  const io = ch.kind === "in" || ch.kind === "out";
  const midi = ch.kind === "midi";
  const tone: Tone = io ? "red" : midi ? "orange" : "blue";
  const scale = midi ? midiScale : audioScale;
  return (
    <Strip $fixed={fixed}>
      <Pan><PanBar $off={midi} />{midi ? "オフ" : "C"}</Pan>
      <Pad>
        <PadButton>M</PadButton>
        <PadButton>{ch.kind === "in" ? "" : "S"}</PadButton>
        <PadButton $dim>L</PadButton>
        <PadButton aria-label="edit">{!midi && <Icon name="edit" size={15} />}</PadButton>
      </Pad>
      <FaderZone>
        <Fader $tone={tone} min={0} max={202} defaultValue={ch.level} aria-label={`${ch.name} volume`} />
        <Scale width="24" height="242" viewBox="0 0 24 242">
          {scale.map(([t, y]) => (
            <React.Fragment key={y}>
              <path d={midi ? `M0 ${y + 1}.500H7` : `M0 ${y}.500H12`} stroke={t === "0" && !midi ? "#a5a8ab" : "#606468"} />
              <text x={midi ? 23 : 22} y={y + 2}>{t}</text>
            </React.Fragment>
          ))}
        </Scale>
        <Meter>
          <svg width="32" height="232" viewBox="0 0 32 232">
            {!midi && meterScale.map(([t, y]) => (
              <React.Fragment key={y}>
                <path d={`M0 ${y}.500H6M25 ${y}.500H32`} stroke="#4d5053" />
                <text x="16" y={y + 2}>{t}</text>
              </React.Fragment>
            ))}
            {ch.kind === "in" && <path d="M1 224H15V230H1ZM16 225H30V230H16Z" fill="#1fd3f5" />}
          </svg>
        </Meter>
      </FaderZone>
      <Values><b>{ch.value}</b><span>{ch.peak}</span></Values>
      <Pad>
        <PadButton>R</PadButton>
        <PadButton>W</PadButton>
        <PadButton aria-label="monitor">{!io && <Icon name="monitor" size={13} />}</PadButton>
        <PadButton aria-label="record enable">{!io && <Icon name="dot" size={14} />}</PadButton>
      </Pad>
      <NumberRow $io={io}>{midi ? <i /> : <Icon name="link" />}{ch.no}</NumberRow>
      <NameRow
        $bg={ch.kind === "in" ? "#919ba6" : io ? c.steel : midi ? "#6457ff" : c.yellow}
        $fg={midi ? "#f0f0ff" : "#1d2012"}
      ><span>{ch.name}</span></NameRow>
    </Strip>
  );
};

const RwChip = () => <Chip><button>R</button><button>W</button></Chip>;
const EditChip = () => (
  <Chip><button aria-label="edit"><Icon name="edit" size={13} /></button><button aria-label="channels"><Icon name="link" size={12} /></button></Chip>
);

const TrackRow = ({ n }: { n: number }) => (
  <Row>
    <ColorCell><Icon name="wave" />{n}</ColorCell>
    <Cells>
      <MuteSolo><button>m</button><button>S</button></MuteSolo>
      <NameInput aria-label={`track ${n}`} defaultValue={`009_2 TRACK 0${n}`} $active={n === 6} />
      <Chips>
        <Chip><button aria-label="record enable"><Icon name="dot" size={15} /></button><button aria-label="monitor"><Icon name="monitor" size={12} /></button></Chip>
        <EditChip />
        <RwChip />
      </Chips>
    </Cells>
    <LevelStrip />
  </Row>
);

export default function App() {
  return (
    <Window>
      <Global />
      <MenuBar>
        <svg width="18" height="18" viewBox="0 0 24 24"><path d="M24 0V24H4L14 12Z" fill="#ddd" /><path d="M11 1L1 12L11 23L15 19L9 12L15 5Z" fill="#b8152f" /><path d="M17 7L21.500 12L17 17L13 12Z" fill="#b8152f" /></svg>
        <Menu>{menus.map(m => <MenuItem key={m}>{m}</MenuItem>)}</Menu>
        <Space $grow={7} />
        <span>Cubase Elements プロジェクト - 009.2</span>
        <Space $grow={6} />
        <WindowButton aria-label="minimize"><Icon name="minimize" size={15} /></WindowButton>
        <WindowButton aria-label="restore"><Icon name="restore" size={14} /></WindowButton>
        <WindowButton aria-label="close"><Icon name="quit" size={14} /></WindowButton>
      </MenuBar>

      <Bar>
        <Group $w={49} $after={55}>
          <Tool aria-label="undo"><Icon name="undo" size={17} /></Tool>
          <Tool aria-label="redo"><Icon name="redo" size={17} /></Tool>
        </Group>
        <Group $w={74}>
          <Tool aria-label="activate"><Icon name="diamond" /></Tool>
          <Tool aria-label="visibility"><Icon name="tree" /></Tool>
          <Tool $on aria-label="mixer"><Icon name="faders" /></Tool>
        </Group>
        <Group $w={98}>{["M", "S", "R", "W"].map(t => <Tool key={t}>{t}</Tool>)}</Group>
        <Group $w={49}>
          <Tool $on aria-label="auto scroll"><Icon name="autoscroll" /></Tool>
          <Tool aria-label="auto scroll options"><Caret /></Tool>
        </Group>
        <TransportBar />
        <Grip />
        <Group $w={246}>
          {tools.map(([n, label], i) => <Tool key={n} $on={i === 0} $notch={i === 0 || i > 7} aria-label={label}><Icon name={n} /></Tool>)}
        </Group>
        <Group $w={44}>
          <Tool aria-label="color"><Icon name="bucket" /></Tool>
          <Tool aria-label="color options"><Caret /></Tool>
        </Group>
        <Group $w={24}><Tool aria-label="crossfade"><Icon name="fade" /></Tool></Group>
        <Group $w={147}>
          <Fixed $w={24} $on aria-label="snap"><Icon name="snap" /></Fixed>
          <Pick><select aria-label="スナップタイプ"><option>グリッド</option></select><Caret /></Pick>
        </Group>
        <Group $w={148}>
          <Pick><Icon name="hash" size={17} /><select aria-label="グリッドの間隔"><option>クオンタイズ値</option></select><Caret /></Pick>
        </Group>
        <Group $w={174}>
          <Fixed $w={25} $split>Q</Fixed>
          <Pick $split><select aria-label="クオンタイズ"><option>1/16&nbsp; 3 連符</option></select><Caret /></Pick>
          <Fixed $w={24} aria-label="iterative"><Icon name="swing" size={17} /></Fixed>
          <Fixed $w={24} aria-label="quantize panel"><Icon name="edit" size={17} /></Fixed>
        </Group>
        <LoadMeter><LoadBar $hot /><LoadBar /></LoadMeter>
        <BarPart $push>
          <Group $w={98}>
            <Tool $on aria-label="left zone"><Icon name="zoneLeft" /></Tool>
            <Tool $on aria-label="lower zone"><Icon name="zoneBottom" /></Tool>
            <Tool aria-label="right zone"><Icon name="zoneRight" /></Tool>
            <Tool aria-label="window layout"><Icon name="zoneSetup" /></Tool>
          </Group>
          <Group $w={25}><Tool aria-label="toolbar setup"><MdSettings size={17} /></Tool></Group>
        </BarPart>
      </Bar>
      <InfoLine>選択オブジェクトなし</InfoLine>

      <Body>
        <LeftZone>
          <TopTab>Inspector</TopTab>
          <LeftBody />
          <TabRow>
            <Tab $on $w={75}>トラック</Tab>
            <Tab $w={81}>エディター</Tab>
          </TabRow>
        </LeftZone>

        <RightZone>
          <Project>
            <TrackPane>
              <TrackHead>
                <AddGroup>
                  <Tool aria-label="add track"><Icon name="plus" size={12} /></Tool>
                  <Tool aria-label="track presets"><Caret /></Tool>
                </AddGroup>
              </TrackHead>
              <TrackList>
                <FolderRow>
                  <FolderCell><Icon name="folder" /></FolderCell>
                  <FolderName>入出力チャンネル</FolderName>
                  <LevelStrip />
                </FolderRow>
                <StereoRow>
                  <StereoCell />
                  <Cells>
                    <MuteSolo><button>m</button><button>S</button></MuteSolo>
                    <NameLine><NameInput aria-label="output channel" defaultValue="Stereo Out" /><VolumeBox>5.18</VolumeBox></NameLine>
                    <Chips><RwChip /><EditChip /><Chip $wide><span>ボリューム</span></Chip></Chips>
                  </Cells>
                  <LevelStrip />
                </StereoRow>
                <SixRows>{[1, 2, 3, 4, 5, 6].map(n => <TrackRow key={n} n={n} />)}</SixRows>
              </TrackList>
              <TrackFoot><span>-</span><Icon name="caret" size={11} /><MdSettings size={14} /></TrackFoot>
            </TrackPane>

            <Timeline>
              <Ruler>{bars.map(b => <span key={b}>{b}</span>)}</Ruler>
              <Lanes>
                <FolderLane />
                <StereoLane />
                <SixRows>
                  {waves.map((w, i) => (
                    <LaneRow key={i}><Clip><Wave {...w} /><span>009_2 TRACK 0{i + 1}</span></Clip></LaneRow>
                  ))}
                </SixRows>
                <BarLines>{bars.map(b => <span key={b} />)}</BarLines>
                <Playhead />
              </Lanes>
              <TimelineFoot>
                <ScrollLine $thumb={455} $rest={729} />
                <ZoomBits><Icon name="caret" size={9} /><span>−</span><ZoomRange aria-label="horizontal zoom" defaultValue={18} /><span>＋</span></ZoomBits>
              </TimelineFoot>
            </Timeline>

            <SideStrip>
              <SideButton aria-label="ruler format"><Icon name="caret" size={10} /></SideButton>
              <Slash width="9" height="9" viewBox="0 0 9 9"><path d="M1 8L8 1" stroke="#b4b6b8" strokeWidth="1.500" /></Slash>
              <ZoomRange $tall={49} aria-label="waveform zoom" defaultValue={100} />
              <SideScroll />
              <Icon name="caret" size={9} />
              <span>−</span>
              <ZoomRange $tall={55} aria-label="vertical zoom" defaultValue={10} />
              <span>+</span>
            </SideStrip>
          </Project>

          <Mixer>
            <Rail>
              <RailMore aria-label="more" />
              <RailButton $on aria-label="faders"><Icon name="railFaders" size={15} /></RailButton>
              <RailButton aria-label="inserts"><Icon name="railRack" size={15} /></RailButton>
              <RailButton aria-label="sends"><Icon name="railMeter" size={15} /></RailButton>
              <Notch width="9" height="15" viewBox="0 0 9 15"><path d="M0 0V15L7 7.500Z" fill={c.panel} /><path d="M1 0L7 7.500L1 15" fill="none" stroke="currentColor" strokeWidth="1.500" /></Notch>
            </Rail>
            <Desk>
              <Strips>
                <ChannelStrip fixed ch={{ name: "Stereo In", no: 1, level: 160, value: "0.00", peak: "-0.7", kind: "in" }} />
                <Bank>{channels.map(ch => <ChannelStrip key={ch.no} ch={ch} />)}</Bank>
                <ChannelStrip fixed ch={{ name: "Stereo Out", no: 1, level: 194, value: "5.18", peak: "-0.8", kind: "out" }} />
              </Strips>
              <DeskScroll><ScrollLine $thumb={160} $rest={10} /></DeskScroll>
            </Desk>
            <Annotation width="140" height="163" viewBox="528 234 420 489" aria-hidden="true">
              <path
                d="M575 358C570 420 575 500 578 565C584 610 598 655 618 690L640 690C665 705 700 717 735 717C770 716 805 705 825 682C870 662 885 630 935 565C942 520 939 450 932 410C915 370 900 310 880 290C850 262 800 240 720 242C660 246 600 268 580 305C545 350 535 400 535 490C545 530 550 580 570 610C580 640 610 675 615 690C640 690 655 706 680 713"
                fill="none" stroke="#f50000" strokeWidth="5" strokeLinejoin="round" strokeLinecap="round"
              />
            </Annotation>
          </Mixer>
          <TabRow>
            <Tab $w={20} aria-label="close zone"><Icon name="close" size={11} /></Tab>
            <Tab $on $w={106}>MixConsole</Tab>
            <Tab $w={82}>エディター</Tab>
            <Tab $w={137}>サンプラーコントロール</Tab>
            <Tab $w={90}>コードパッド</Tab>
            <Tab $w={20} aria-label="tab setup"><MdSettings size={14} /></Tab>
          </TabRow>
        </RightZone>
      </Body>

      <Bar as="footer" $spread>
        <BarPart>
          <Group $w={25}><Tool aria-label="loop clock"><Icon name="clock" /></Tool></Group>
          <Group $w={44}><Tool aria-label="record mode"><Icon name="dot" /></Tool><Tool aria-label="record mode options"><Caret /></Tool></Group>
          <Grip />
          <Group $w={44}><Tool aria-label="audio record mode"><Icon name="wave" /></Tool><Tool aria-label="audio options"><Caret /></Tool></Group>
          <Grip />
          <Group $w={168}>
            <Pick $w={100} $split><Icon name="din" size={17} /><select aria-label="MIDI 録音モード"><option>新規パート</option></select><Caret /></Pick>
            <Pick><select aria-label="MIDI サイクル録音"><option>ミックス</option></select><Caret /></Pick>
          </Group>
          <Grip />
          <Group $w={37}><Fixed $w={35}>AQ</Fixed></Group>
        </BarPart>
        <BarPart>
          <Locator $w={147}><LocatorIcon $notch><Icon name="flagLeft" size={15} /></LocatorIcon><input aria-label="左ロケーター" defaultValue="1.  1.  1.    0" /></Locator>
          <Locator $w={147}><LocatorIcon $notch><Icon name="flagRight" size={15} /></LocatorIcon><input aria-label="右ロケーター" defaultValue="142.  3.  4.  40" /></Locator>
          <Group $w={49} $after={2}><Tool aria-label="punch in"><Icon name="punchIn" /></Tool><Tool aria-label="punch out"><Icon name="punchOut" /></Tool></Group>
          <TransportBar />
          <Grip />
          <Locator $w={148}><LocatorIcon><Icon name="note" /></LocatorIcon><input aria-label="位置" defaultValue="76.  1.  1.  64" /></Locator>
          <TempoBox>
            <LocatorIcon $on><Icon name="tempo" /></LocatorIcon>
            <input aria-label="テンポ" defaultValue="120.000" />
            <Fixed $w={23} aria-label="tempo step"><Icon name="spin" size={14} /></Fixed>
            <input aria-label="拍子" defaultValue="4/4" />
          </TempoBox>
          <Grip />
        </BarPart>
        <BarPart>
          <Group $w={49}><Tool aria-label="metronome"><Icon name="metronome" /></Tool><Tool aria-label="metronome setup"><Icon name="edit" size={17} /></Tool></Group>
          <Grip />
          <OutMeter><span /><OutLevel /><span>5.18</span></OutMeter>
          <Clipped><Icon name="caretLeft" size={9} /></Clipped>
          <Grip />
          <Group $w={25}><Tool aria-label="transport setup"><MdSettings size={17} /></Tool></Group>
        </BarPart>
      </Bar>
    </Window>
  );
}
